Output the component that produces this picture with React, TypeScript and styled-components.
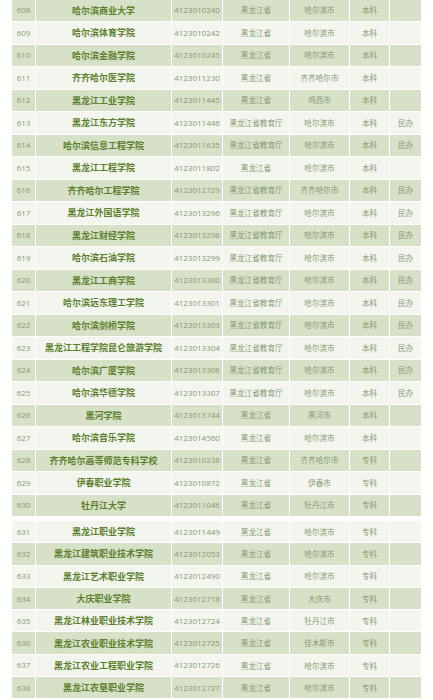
import styled, { createGlobalStyle } from "styled-components";

const GlobalStyle = createGlobalStyle`
    html, body {
        margin: 0;
        padding: 0;
        background: #ffffff;
    }
    body {
        font-family: "Noto Sans CJK SC", "Noto Sans", sans-serif;
        overflow: hidden;
    }
`;

const Page = styled.div`
    display: flex;
    flex-direction: column;
    gap: 3px;
    width: 410px;
    margin: -1.5px 0 0 11px;
`;

const Table = styled.table<{ $rowHeight: number }>`
    width: 410px;
    border-collapse: collapse;
    table-layout: fixed;
    td {
        height: ${(props) => props.$rowHeight}px;
    }
`;

const Row = styled.tr<{ $dark: boolean }>`
    background-color: ${(props) => (props.$dark ? "#d6e1c7" : "#f2f6ee")};
`;

const Cell = styled.td`
    padding: 0;
    border: 1px solid #ffffff;
    text-align: center;
    vertical-align: middle;
    white-space: nowrap;
    overflow: hidden;
    color: #879870;
    font-size: 7.6px;
    line-height: 1;
`;

const NumCell = styled(Cell)`
    font-family: "Open Sans", "Noto Sans", sans-serif;
    font-size: 8px;
`;

const NameCell = styled(Cell)`
    color: #5c7f2c;
    font-size: 9px;
    font-weight: 700;
`;

type School = [number, string, string, string, string, string, string];

const A = "黑龙江省";
const B = "黑龙江省教育厅";
const H = "哈尔滨市";

const first: School[] = [
    [608, "哈尔滨商业大学", "4123010240", A, H, "本科", ""],
    [609, "哈尔滨体育学院", "4123010242", A, H, "本科", ""],
    [610, "哈尔滨金融学院", "4123010245", A, H, "本科", ""],
    [611, "齐齐哈尔医学院", "4123011230", A, "齐齐哈尔市", "本科", ""],
    [612, "黑龙江工业学院", "4123011445", A, "鸡西市", "本科", ""],
    [613, "黑龙江东方学院", "4123011446", B, H, "本科", "民办"],
    [614, "哈尔滨信息工程学院", "4123011635", B, H, "本科", "民办"],
    [615, "黑龙江工程学院", "4123011802", A, H, "本科", ""],
    [616, "齐齐哈尔工程学院", "4123012729", B, "齐齐哈尔市", "本科", "民办"],
    [617, "黑龙江外国语学院", "4123013296", B, H, "本科", "民办"],
    [618, "黑龙江财经学院", "4123013298", B, H, "本科", "民办"],
    [619, "哈尔滨石油学院", "4123013299", B, H, "本科", "民办"],
    [620, "黑龙江工商学院", "4123013300", B, H, "本科", "民办"],
    [621, "哈尔滨远东理工学院", "4123013301", B, H, "本科", "民办"],
    [622, "哈尔滨剑桥学院", "4123013303", B, H, "本科", "民办"],
    [623, "黑龙江工程学院昆仑旅游学院", "4123013304", B, H, "本科", "民办"],
    [624, "哈尔滨广厦学院", "4123013306", B, H, "本科", "民办"],
    [625, "哈尔滨华德学院", "4123013307", B, H, "本科", "民办"],
    [626, "黑河学院", "4123013744", A, "黑河市", "本科", ""],
    [627, "哈尔滨音乐学院", "4123014560", A, H, "本科", ""],
    [628, "齐齐哈尔高等师范专科学校", "4123010238", A, "齐齐哈尔市", "专科", ""],
    [629, "伊春职业学院", "4123010872", A, "伊春市", "专科", ""],
    [630, "牡丹江大学", "4123011046", A, "牡丹江市", "专科", ""],
];

const second: School[] = [
    [631, "黑龙江职业学院", "4123011449", A, H, "专科", ""],
    [632, "黑龙江建筑职业技术学院", "4123012053", A, H, "专科", ""],
    [633, "黑龙江艺术职业学院", "4123012490", A, H, "专科", ""],
    [634, "大庆职业学院", "4123012718", A, "大庆市", "专科", ""],
    [635, "黑龙江林业职业技术学院", "4123012724", A, "牡丹江市", "专科", ""],
    [636, "黑龙江农业职业技术学院", "4123012725", A, "佳木斯市", "专科", ""],
    [637, "黑龙江农业工程职业学院", "4123012726", A, H, "专科", ""],
    [638, "黑龙江农垦职业学院", "4123012727", A, H, "专科", ""],
];

const widths = [24, 136, 51, 67, 60, 40, 32];

function SchoolTable({ rows, rowHeight }: { rows: School[]; rowHeight: number }) {
    return (
        <Table $rowHeight={rowHeight}>
            <colgroup>
                {widths.map((w, i) => (
                    <col key={i} style={{ width: w }} />
                ))}
            </colgroup>
            <tbody>
                {rows.map(([no, name, code, dept, city, level, note]) => (
                    <Row key={no} $dark={no % 2 === 0}>
                        <NumCell>{no}</NumCell>
                        <NameCell>{name}</NameCell>
                        <NumCell>{code}</NumCell>
                        <Cell>{dept}</Cell>
                        <Cell>{city}</Cell>
                        <Cell>{level}</Cell>
                        <Cell>{note}</Cell>
                    </Row>
                ))}
            </tbody>
        </Table>
    );
}

export default function App() {
    return (
        <>
            <GlobalStyle />
            <Page>
                <SchoolTable rows={first} rowHeight={21.5} />
                <SchoolTable rows={second} rowHeight={21.3} />
            </Page>
        </>
    );
}
